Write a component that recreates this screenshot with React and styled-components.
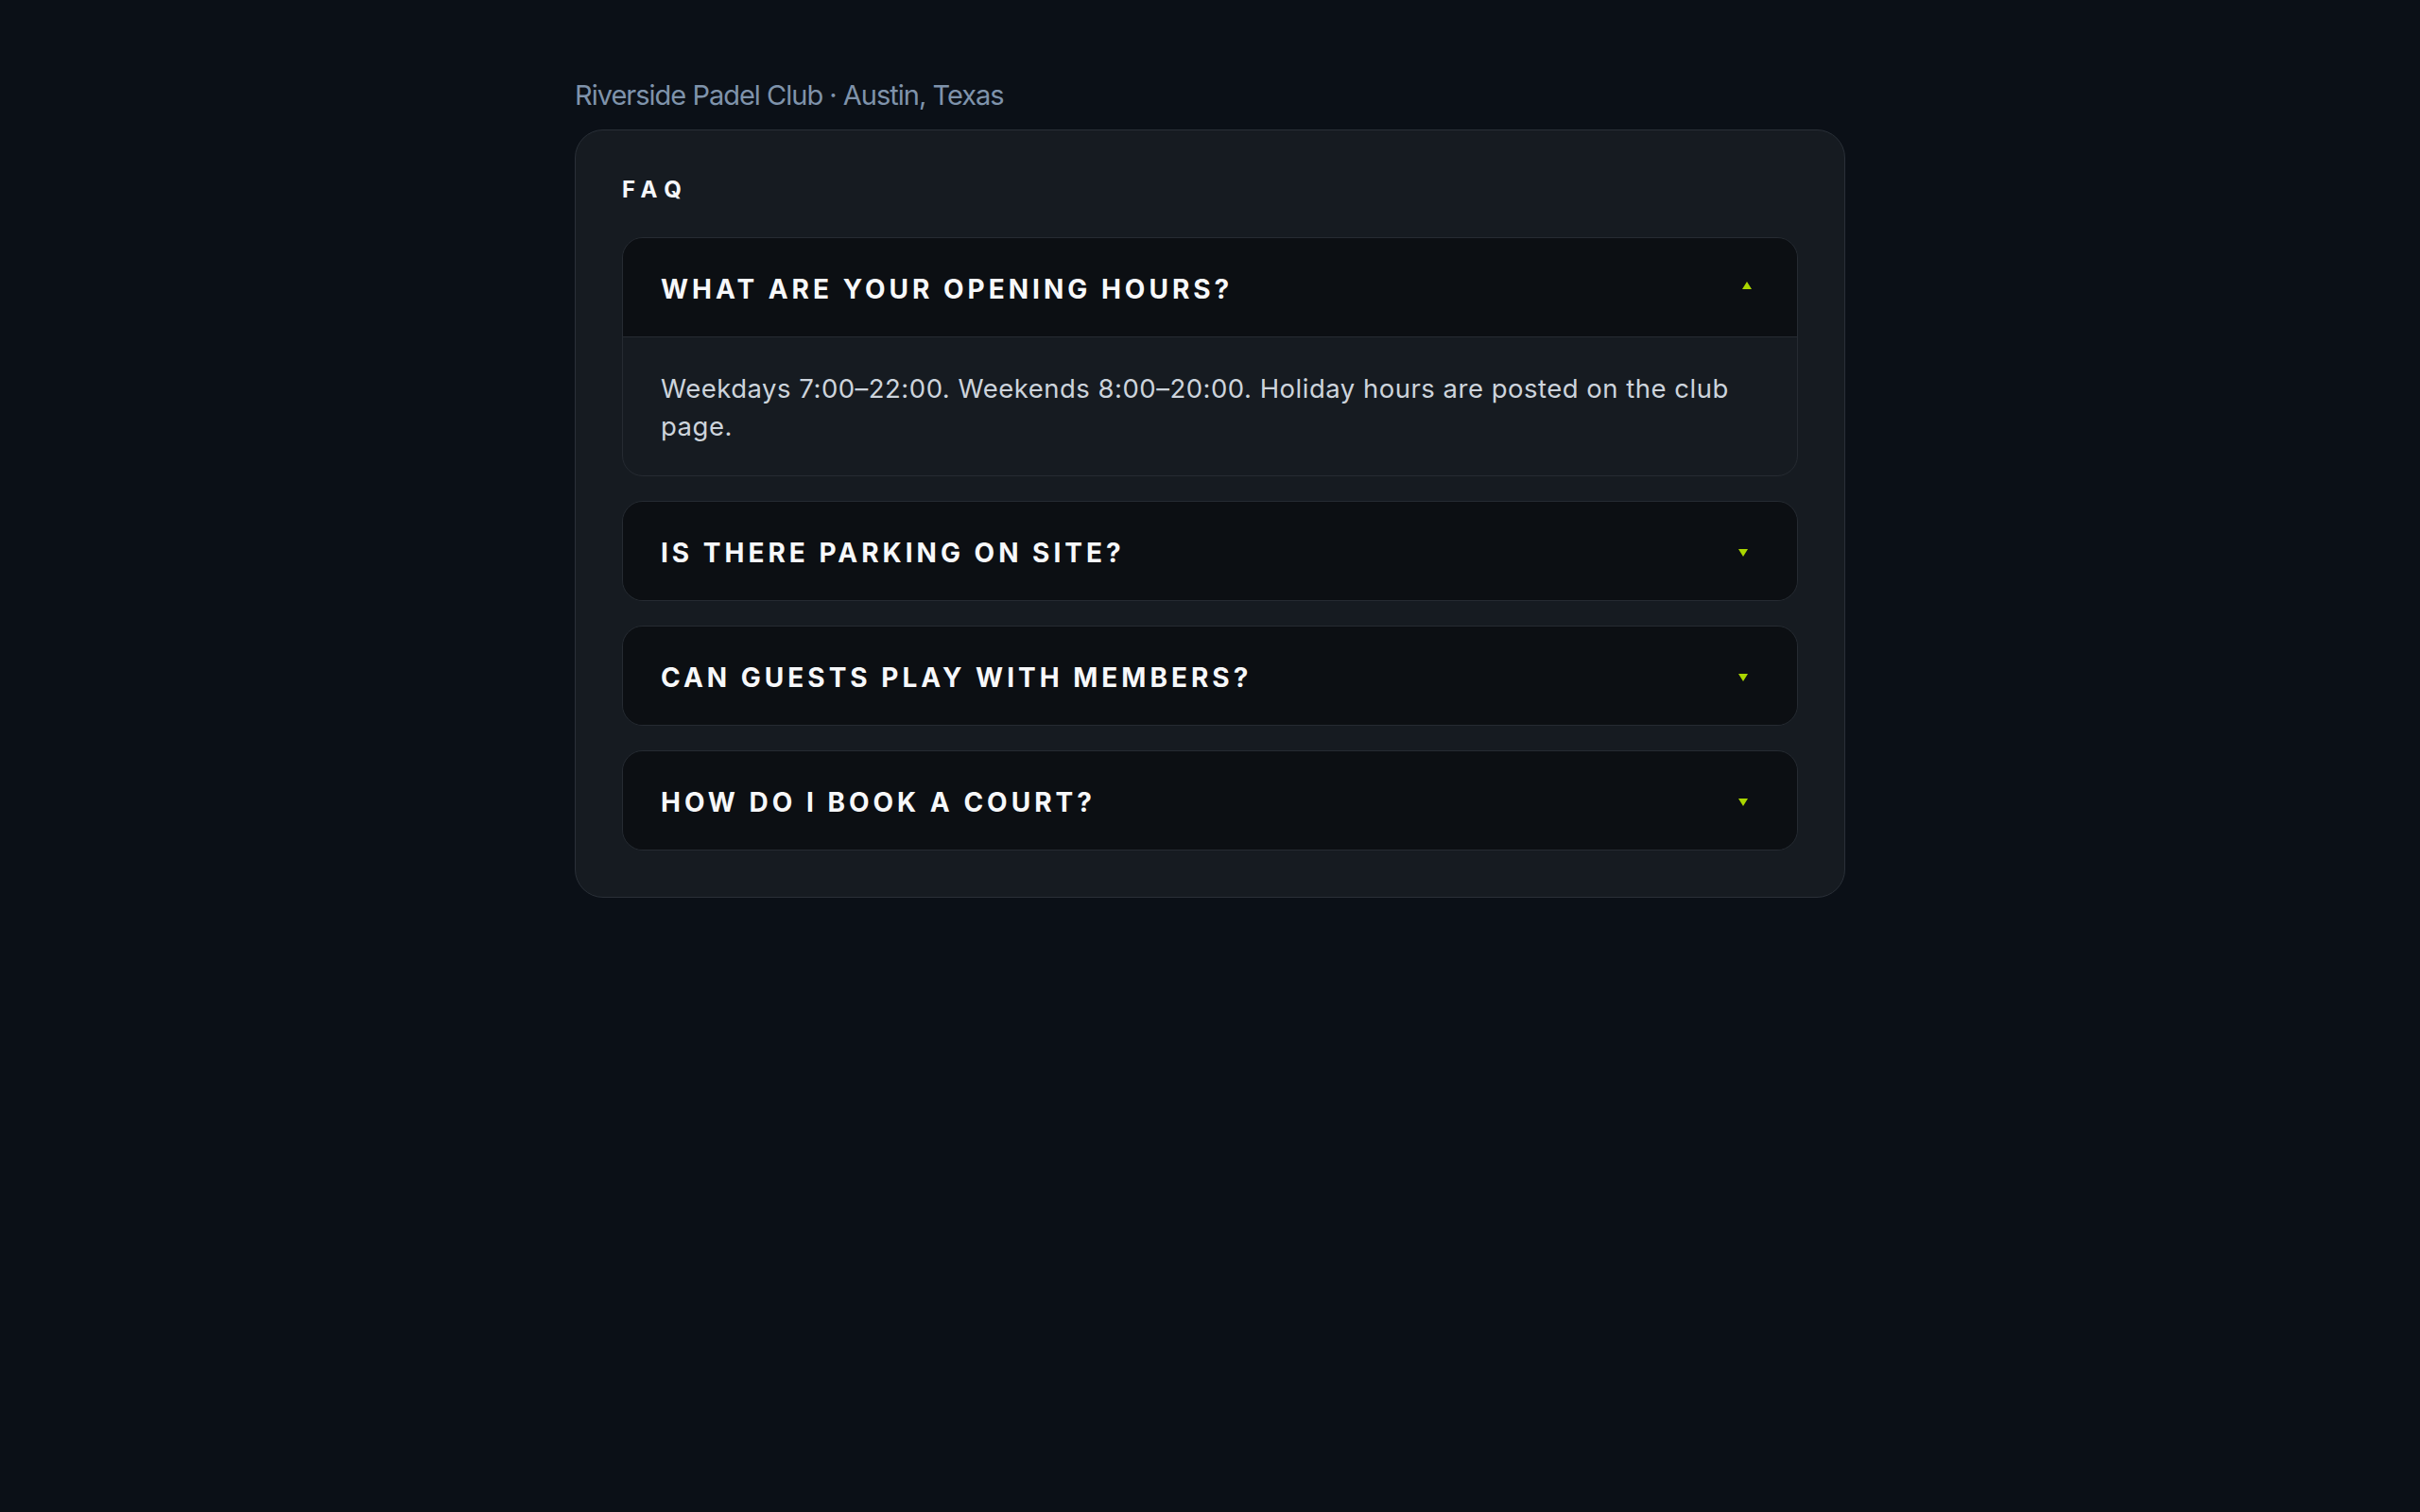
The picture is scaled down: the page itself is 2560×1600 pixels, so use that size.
import React, { useState } from 'react';
import styled, { createGlobalStyle } from 'styled-components';

const faqs = [
    {
        question: 'What are your opening hours?',
        answer: 'Weekdays 7:00–22:00. Weekends 8:00–20:00. Holiday hours are posted on the club page.',
    },
    {
        question: 'Is there parking on site?',
        answer: 'Yes, free parking is available next to the clubhouse.',
    },
    {
        question: 'Can guests play with members?',
        answer: 'Guests are welcome when they play with a member. A guest fee applies.',
    },
    {
        question: 'How do I book a court?',
        answer: 'Book through the club app or at the front desk.',
    },
];

const App = () => {
    const [openIndex, setOpenIndex] = useState(0);

    return (
        <>
            <GlobalStyle />
            <Page>
                <Subtitle>Riverside Padel Club · Austin, Texas</Subtitle>
                <Card>
                    <Heading>FAQ</Heading>
                    <List>
                        {faqs.map((item, index) => {
                            const open = openIndex === index;
                            return (
                                <Item key={item.question}>
                                    <Question
                                        type="button"
                                        $open={open}
                                        onClick={() => setOpenIndex(open ? -1 : index)}
                                    >
                                        <QuestionText>{item.question}</QuestionText>
                                        <Caret $open={open} />
                                    </Question>
                                    {open && <Answer>{item.answer}</Answer>}
                                </Item>
                            );
                        })}
                    </List>
                </Card>
            </Page>
        </>
    );
};

const GlobalStyle = createGlobalStyle`
    html, body {
        margin: 0;
        background: #0b1017;
    }
    body {
        font-family: Inter, 'Noto Sans', sans-serif;
        -webkit-font-smoothing: antialiased;
    }
`;

const Page = styled.div`
    width: 1344px;
    margin: 0 auto;
    padding: 84px 0 120px;
    min-height: 1600px;
    box-sizing: border-box;
`;

const Subtitle = styled.p`
    margin: 0 0 18px;
    font-size: 29px;
    line-height: 1.2;
    letter-spacing: -1px;
    color: #7f93ab;
`;

const Card = styled.section`
    background: #161b21;
    border: 1px solid #2a3038;
    border-radius: 30px;
    padding: 49px;
`;

const Heading = styled.h2`
    margin: 0 0 35px;
    font-size: 24px;
    line-height: 1.2;
    font-weight: 700;
    letter-spacing: 0.32em;
    color: #f5f7fa;
`;

const List = styled.div`
    display: flex;
    flex-direction: column;
    gap: 26px;
`;

const Item = styled.div`
    border: 1px solid #262b32;
    border-radius: 22px;
    overflow: hidden;
    background: #161b21;
`;

const Question = styled.button`
    display: flex;
    align-items: center;
    justify-content: space-between;
    width: 100%;
    height: 104px;
    padding: 4px 40px 0;
    border: 0;
    background: #0c0f13;
    cursor: pointer;
    font-family: inherit;
    text-align: left;
`;

const QuestionText = styled.span`
    font-size: 28px;
    font-weight: 700;
    letter-spacing: 4px;
    text-transform: uppercase;
    color: #f7f8fa;
`;

const Caret = styled.span`
    width: 0;
    height: 0;
    margin-right: 12px;
    border-left: 5.5px solid transparent;
    border-right: 5.5px solid transparent;
    border-top: 8px solid #aad600;
    transform: ${({ $open }) =>
        $open ? 'translate(4px, -4px) rotate(180deg)' : 'translateY(0)'};
`;

const Answer = styled.div`
    border-top: 1px solid #262b32;
    padding: 34px 40px 32px;
    font-size: 27.5px;
    line-height: 40px;
    letter-spacing: 0.5px;
    color: #cdd4dc;
`;

export default App;
